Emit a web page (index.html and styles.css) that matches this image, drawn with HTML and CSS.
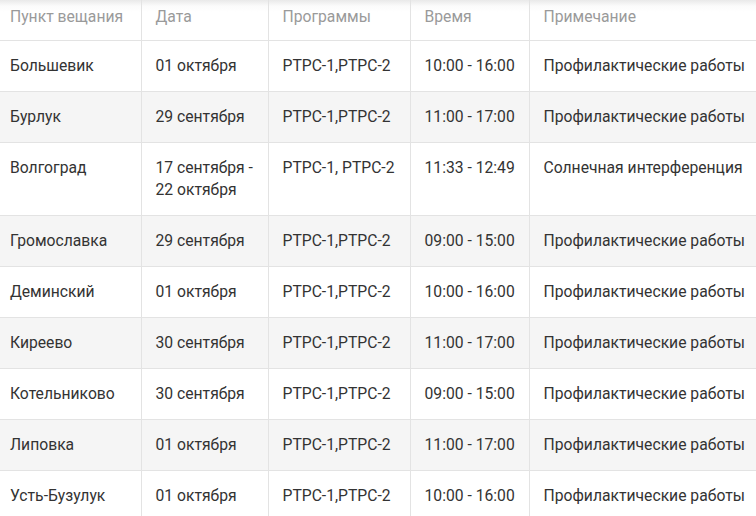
FILE: index.html
```html
<!DOCTYPE html>
<html lang="ru">
<head>
<meta charset="utf-8">
<title>Отключения</title>
<link rel="stylesheet" href="styles.css">
</head>
<body>
<table class="schedule">
  <colgroup>
    <col class="c1"><col class="c2"><col class="c3"><col class="c4"><col class="c5">
  </colgroup>
  <thead>
    <tr><th>Пункт вещания</th><th>Дата</th><th>Программы</th><th>Время</th><th>Примечание</th></tr>
  </thead>
  <tbody>
    <tr><td>Большевик</td><td>01 октября</td><td>РТРС-1,РТРС-2</td><td>10:00 - 16:00</td><td>Профилактические работы</td></tr>
    <tr><td>Бурлук</td><td>29 сентября</td><td>РТРС-1,РТРС-2</td><td>11:00 - 17:00</td><td>Профилактические работы</td></tr>
    <tr><td>Волгоград</td><td>17 сентября - 22 октября</td><td>РТРС-1, РТРС-2</td><td>11:33 - 12:49</td><td>Солнечная интерференция</td></tr>
    <tr><td>Громославка</td><td>29 сентября</td><td>РТРС-1,РТРС-2</td><td>09:00 - 15:00</td><td>Профилактические работы</td></tr>
    <tr><td>Деминский</td><td>01 октября</td><td>РТРС-1,РТРС-2</td><td>10:00 - 16:00</td><td>Профилактические работы</td></tr>
    <tr><td>Киреево</td><td>30 сентября</td><td>РТРС-1,РТРС-2</td><td>11:00 - 17:00</td><td>Профилактические работы</td></tr>
    <tr><td>Котельниково</td><td>30 сентября</td><td>РТРС-1,РТРС-2</td><td>09:00 - 15:00</td><td>Профилактические работы</td></tr>
    <tr><td>Липовка</td><td>01 октября</td><td>РТРС-1,РТРС-2</td><td>11:00 - 17:00</td><td>Профилактические работы</td></tr>
    <tr><td>Усть-Бузулук</td><td>01 октября</td><td>РТРС-1,РТРС-2</td><td>10:00 - 16:00</td><td>Профилактические работы</td></tr>
  </tbody>
</table>
</body>
</html>
```
FILE: styles.css
```css
html, body {
  margin: 0;
  padding: 0;
  background: #fff;
  overflow: hidden;
}
body {
  font-family: Roboto, "Liberation Sans", sans-serif;
  font-size: 15.7px;
  color: #333;
}
.schedule {
  border-collapse: collapse;
  table-layout: fixed;
  width: 756px;
}
.c1 { width: 141px; }
.c2 { width: 127px; }
.c3 { width: 142px; }
.c4 { width: 119px; }
.c5 { width: 227px; }
.schedule th,
.schedule td {
  text-align: left;
  vertical-align: top;
  line-height: 22px;
  padding: 14px 0 14px 14px;
  border-left: 1px solid #e3e3e3;
  border-bottom: 1px solid #e3e3e3;
  font-weight: 400;
}
.schedule th:first-child,
.schedule td:first-child {
  border-left: none;
  padding-left: 10px;
}
.schedule td:nth-child(2) {
  padding-right: 8px;
}
.schedule th {
  color: #9a9a9a;
  padding-top: 6px;
  padding-bottom: 12px;
}
.schedule thead tr {
  background: linear-gradient(#e9e9e9 0, #fbfbfb 6px, #fff 12px);
}
.schedule tbody tr:nth-child(even) {
  background: #f5f5f5;
}
```
